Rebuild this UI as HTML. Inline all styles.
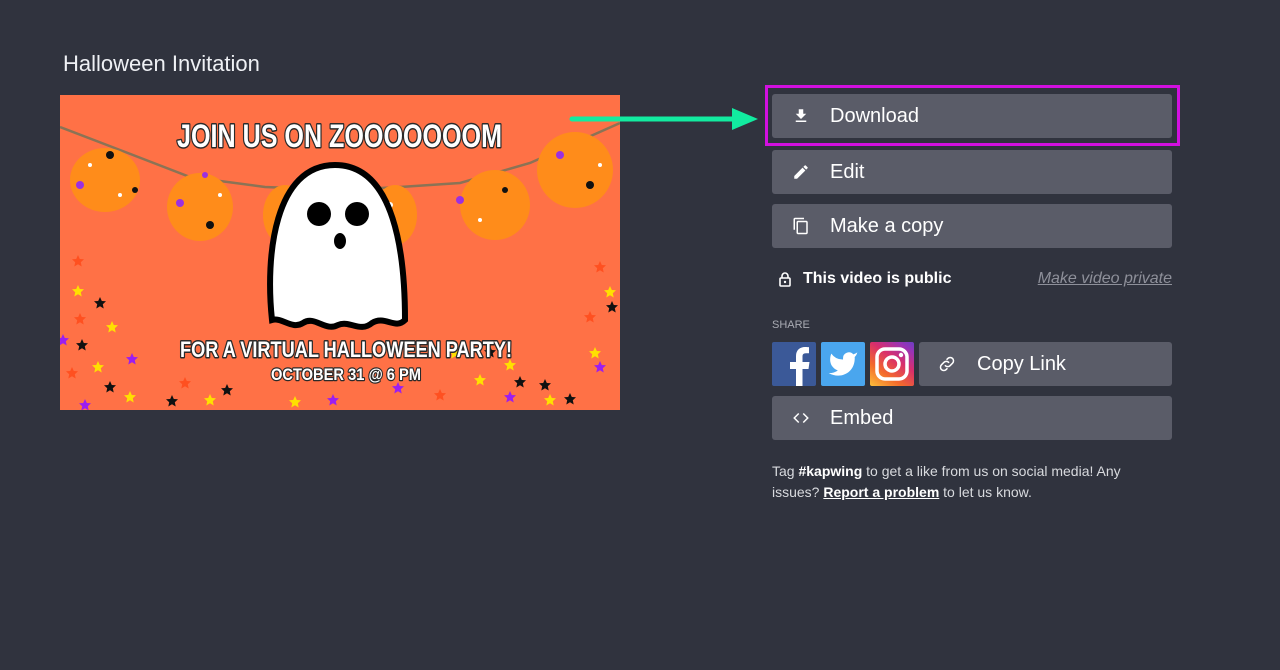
<!DOCTYPE html>
<html><head><meta charset="utf-8">
<style>
*{margin:0;padding:0;box-sizing:border-box}
body{width:1280px;height:670px;background:#30333e;font-family:"Liberation Sans",sans-serif;position:relative;overflow:hidden;color:#fff}
.title{position:absolute;left:63px;top:51px;font-size:22px;color:#eef0f4}
.btn{position:absolute;left:772px;width:400px;height:44px;background:#5a5c68;border-radius:3px;font-size:20px;color:#fff}
.btn svg{position:absolute;left:20px;top:13px}
.btn span{position:absolute;left:58px;top:11px}
.hl{position:absolute;left:765px;top:85px;width:415px;height:61px;border:3px solid #d210e0}
.pub{position:absolute;left:803px;top:270px;font-size:16px;font-weight:bold}
.priv{position:absolute;right:108px;top:270px;font-size:16px;color:#8e909a;font-style:italic;text-decoration:underline}
.share{position:absolute;left:772px;top:319px;font-size:11px;color:#a9abb3}
.soc{position:absolute;top:342px;width:44px;height:44px;border-radius:2px;overflow:hidden}
.foot{position:absolute;left:772px;top:461px;width:368px;font-size:14px;line-height:21px;color:#d8dade}
</style></head><body>
<div class="title">Halloween Invitation</div>

<svg style="position:absolute;left:60px;top:95px" width="560" height="315" viewBox="0 0 560 315">
<defs>
<polygon id="st" points="0,-6 1.8,-2 6,-1.8 2.8,1.2 3.7,5.5 0,3.2 -3.7,5.5 -2.8,1.2 -6,-1.8 -1.8,-2"/>
</defs>
<rect width="560" height="315" fill="#ff7146"/>
<polyline points="0,32 60,55 130,82 205,92 280,95 340,92 400,88 470,68 560,28" fill="none" stroke="#8b7355" stroke-width="2.5"/>
<g fill="#ff8c1a">
<ellipse cx="45" cy="85" rx="35" ry="32"/>
<ellipse cx="140" cy="112" rx="33" ry="34"/>
<ellipse cx="225" cy="120" rx="22" ry="30"/>
<ellipse cx="335" cy="120" rx="22" ry="30"/>
<ellipse cx="435" cy="110" rx="35" ry="35"/>
<ellipse cx="515" cy="75" rx="38" ry="38"/>
</g>
<g fill="#9b30e0"><circle cx="20" cy="90" r="4"/><circle cx="120" cy="108" r="4"/><circle cx="400" cy="105" r="4"/><circle cx="500" cy="60" r="4"/><circle cx="145" cy="80" r="3"/><circle cx="225" cy="115" r="4"/></g>
<g fill="#111"><circle cx="50" cy="60" r="4"/><circle cx="150" cy="130" r="4"/><circle cx="445" cy="95" r="3"/><circle cx="530" cy="90" r="4"/><circle cx="75" cy="95" r="3"/></g>
<g fill="#fff"><circle cx="30" cy="70" r="2"/><circle cx="60" cy="100" r="2"/><circle cx="160" cy="100" r="2"/><circle cx="420" cy="125" r="2"/><circle cx="540" cy="70" r="2"/><circle cx="330" cy="110" r="3"/></g>
<g fill="#ffe000"><use href="#st" x="18" y="196"/><use href="#st" x="52" y="232"/><use href="#st" x="38" y="272"/><use href="#st" x="70" y="302"/><use href="#st" x="150" y="305"/><use href="#st" x="235" y="307"/><use href="#st" x="420" y="285"/><use href="#st" x="450" y="270"/><use href="#st" x="535" y="258"/><use href="#st" x="550" y="197"/><use href="#st" x="395" y="258"/><use href="#st" x="490" y="305"/></g>
<g fill="#111"><use href="#st" x="40" y="208"/><use href="#st" x="22" y="250"/><use href="#st" x="50" y="292"/><use href="#st" x="112" y="306"/><use href="#st" x="167" y="295"/><use href="#st" x="430" y="257"/><use href="#st" x="460" y="287"/><use href="#st" x="510" y="304"/><use href="#st" x="552" y="212"/><use href="#st" x="485" y="290"/></g>
<g fill="#9b1ef0"><use href="#st" x="3" y="245"/><use href="#st" x="72" y="264"/><use href="#st" x="25" y="310"/><use href="#st" x="273" y="305"/><use href="#st" x="540" y="272"/><use href="#st" x="338" y="293"/><use href="#st" x="450" y="302"/></g>
<g fill="#ff5020"><use href="#st" x="18" y="166"/><use href="#st" x="20" y="224"/><use href="#st" x="12" y="278"/><use href="#st" x="125" y="288"/><use href="#st" x="540" y="172"/><use href="#st" x="530" y="222"/><use href="#st" x="380" y="300"/></g>
<g font-family="Liberation Sans" font-weight="bold" fill="#fff" stroke="#2a2a2a" paint-order="stroke" stroke-linejoin="round">
<text x="117" y="52" font-size="32" stroke-width="3" textLength="325" lengthAdjust="spacingAndGlyphs">JOIN US ON ZOOOOOOOM</text>
<text x="120" y="262" font-size="22" stroke-width="3" textLength="332" lengthAdjust="spacingAndGlyphs">FOR A VIRTUAL HALLOWEEN PARTY!</text>
<text x="211" y="285" font-size="17" stroke-width="2.5" textLength="150" lengthAdjust="spacingAndGlyphs">OCTOBER 31 @ 6 PM</text>
</g>
<path d="M212 225 C205 160 215 70 275 70 C335 70 345 160 345 225 C335 235 325 220 312 228 C300 238 290 225 278 230 C265 237 255 220 243 228 C232 235 222 222 212 225Z" fill="#fff" stroke="#000" stroke-width="6"/>
<circle cx="259" cy="119" r="12" fill="#000"/><circle cx="297" cy="119" r="12" fill="#000"/>
<ellipse cx="280" cy="146" rx="6" ry="8" fill="#000"/>
</svg>

<svg style="position:absolute;left:568px;top:106px" width="195" height="26"><line x1="4" y1="13" x2="170" y2="13" stroke="#12eba0" stroke-width="5" stroke-linecap="round"/><polygon points="164,2 190,13 164,24" fill="#12eba0"/></svg>

<div class="hl"></div>
<div class="btn" style="top:94px"><svg width="18" height="18" viewBox="0 0 24 24"><path d="M19 9h-4V3H9v6H5l7 7 7-7zM5 18v2h14v-2H5z" fill="#fff"/></svg><span>Download</span></div>
<div class="btn" style="top:150px"><svg width="18" height="18" viewBox="0 0 24 24"><path d="M3 17.25V21h3.75L17.81 9.94l-3.75-3.75L3 17.25zM20.71 7.04a1 1 0 000-1.41l-2.34-2.34a1 1 0 00-1.41 0l-1.83 1.83 3.75 3.75 1.83-1.83z" fill="#fff"/></svg><span>Edit</span></div>
<div class="btn" style="top:204px"><svg width="18" height="18" viewBox="0 0 24 24"><path d="M16 1H4c-1.1 0-2 .9-2 2v14h2V3h12V1zm3 4H8c-1.1 0-2 .9-2 2v14c0 1.1.9 2 2 2h11c1.1 0 2-.9 2-2V7c0-1.1-.9-2-2-2zm0 16H8V7h11v14z" fill="#fff"/></svg><span>Make a copy</span></div>

<svg style="position:absolute;left:778px;top:271px" width="14" height="16" viewBox="0 0 14 16"><path d="M4 7V5a3 3 0 016 0v2" fill="none" stroke="#fff" stroke-width="1.6"/><rect x="2" y="7" width="10" height="8" rx="1" fill="none" stroke="#fff" stroke-width="1.6"/><circle cx="7" cy="11" r="1.2" fill="#fff"/></svg>
<div class="pub">This video is public</div>
<div class="priv">Make video private</div>
<div class="share">SHARE</div>

<div class="soc" style="left:772px;background:#3b5998"><svg width="44" height="44" viewBox="0 0 44 44"><path d="M24 44V27h-6v-7h6v-6c0-6 4-9 9-9 2 0 4 .2 4 .2v6h-3c-3 0-3.5 1.5-3.5 3.5V20h7l-1 7h-6v17z" fill="#fff"/></svg></div>
<div class="soc" style="left:821px;background:#4aa6ee"><svg width="44" height="44" viewBox="0 0 24 24"><path transform="translate(3.5 3.5) scale(0.71)" d="M23 3a10.9 10.9 0 01-3.14 1.53 4.48 4.48 0 00-7.86 3v1A10.66 10.66 0 013 4s-4 9 5 13a11.64 11.64 0 01-7 2c9 5 20 0 20-11.5a4.5 4.5 0 00-.08-.83A7.72 7.72 0 0023 3z" fill="#fff"/></svg></div>
<div class="soc" style="left:870px;background:linear-gradient(35deg,#fdc03b 0%,#f46b2b 30%,#d92e6b 60%,#9a33b5 85%,#6a3fc4 100%)"><svg width="44" height="44" viewBox="0 0 44 44"><rect x="7" y="7" width="30" height="30" rx="8" fill="none" stroke="#fff" stroke-width="3.5"/><circle cx="22" cy="22" r="7" fill="none" stroke="#fff" stroke-width="3.5"/><circle cx="31" cy="13" r="2.2" fill="#fff"/></svg></div>
<div class="btn" style="top:342px;left:919px;width:253px"><svg style="left:18px;top:12px" width="20" height="20" viewBox="0 0 24 24"><path d="M10 14a4 4 0 005.66 0l3-3a4 4 0 00-5.66-5.66l-1 1M14 10a4 4 0 00-5.66 0l-3 3a4 4 0 005.66 5.66l1-1" fill="none" stroke="#fff" stroke-width="1.8" stroke-linecap="round"/></svg><span style="left:58px">Copy Link</span></div>
<div class="btn" style="top:396px"><svg width="18" height="18" viewBox="0 0 24 24"><path d="M9 6l-6 6 6 6M15 6l6 6-6 6" fill="none" stroke="#fff" stroke-width="2"/></svg><span>Embed</span></div>

<div class="foot">Tag <b style="color:#fff">#kapwing</b> to get a like from us on social media! Any issues? <u style="color:#fff;font-weight:bold">Report a problem</u> to let us know.</div>
</body></html>
